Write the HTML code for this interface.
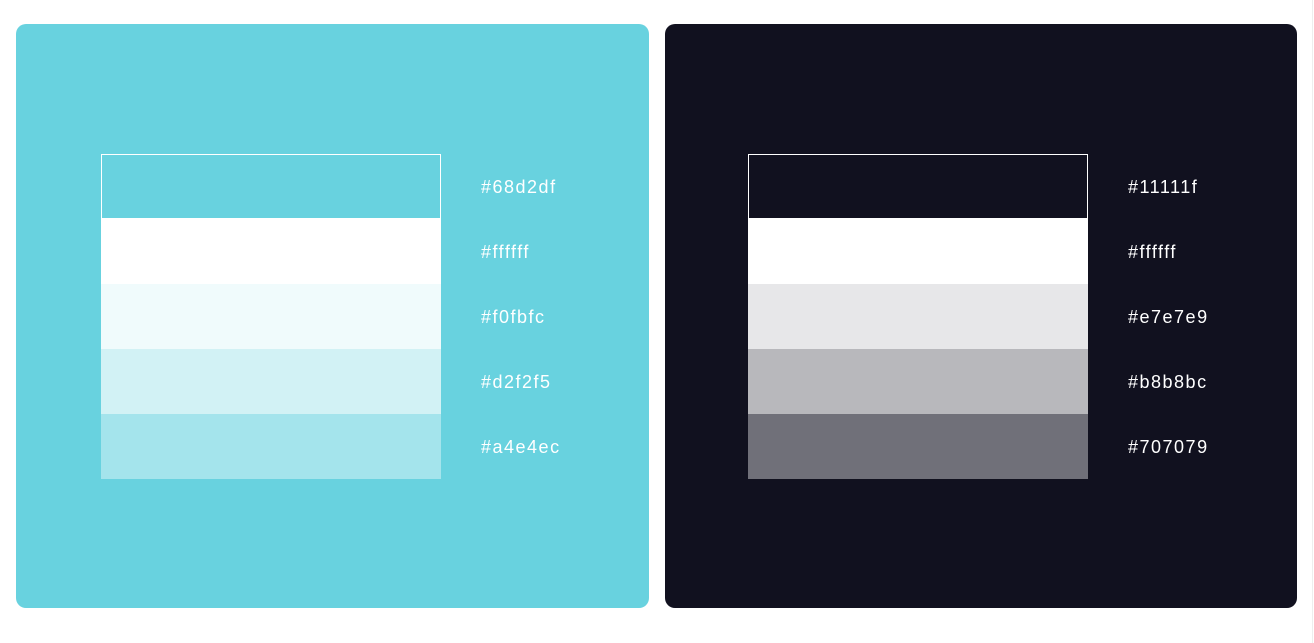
<!DOCTYPE html><html><head><style>
body{margin:0;width:1314px;height:643px;background:#fff;position:relative;overflow:hidden;font-family:"Liberation Sans",sans-serif}
.card{position:absolute;top:24px;width:633px;height:584px;border-radius:10px}
.box{position:absolute;left:85px;top:130px;width:340px}
.box div{height:65px}
.lab{position:absolute;left:465px;color:#fff;font-size:18px;letter-spacing:1.5px;line-height:20px}
</style></head><body>
<div class="card" style="left:16px;background:#68d2df">
<div class="box"><div style="background:#68d2df;outline:1px solid #fff;outline-offset:-1px"></div><div style="background:#fff"></div><div style="background:#f0fbfc"></div><div style="background:#d2f2f5"></div><div style="background:#a4e4ec"></div></div>
<div class="lab" style="top:153px">#68d2df</div><div class="lab" style="top:218px">#ffffff</div><div class="lab" style="top:283px">#f0fbfc</div><div class="lab" style="top:348px">#d2f2f5</div><div class="lab" style="top:413px">#a4e4ec</div>
</div>
<div class="card" style="left:665px;width:632px;background:#11111f">
<div class="box" style="left:83px"><div style="background:#11111f;outline:1px solid #fff;outline-offset:-1px"></div><div style="background:#fff"></div><div style="background:#e7e7e9"></div><div style="background:#b8b8bc"></div><div style="background:#707079"></div></div>
<div class="lab" style="left:463px;top:153px">#11111f</div><div class="lab" style="left:463px;top:218px">#ffffff</div><div class="lab" style="left:463px;top:283px">#e7e7e9</div><div class="lab" style="left:463px;top:348px">#b8b8bc</div><div class="lab" style="left:463px;top:413px">#707079</div>
</div>
<div style="position:absolute;left:1312px;top:0;width:1px;height:643px;background:#eee"></div>
</body></html>
